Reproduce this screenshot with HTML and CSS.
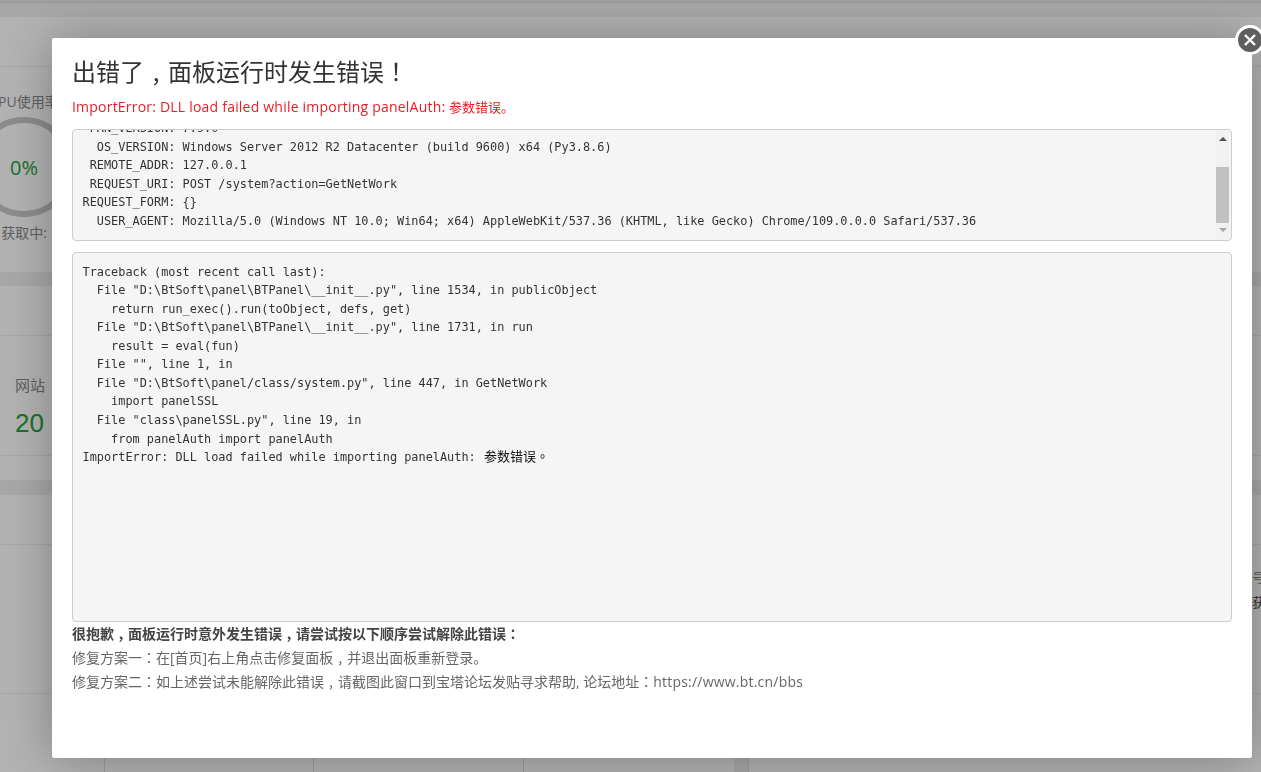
FILE: index.html
```html
<!DOCTYPE html>
<html lang="zh-CN">
<head>
<meta charset="utf-8">
<title>面板错误</title>
<link rel="stylesheet" href="styles.css">
</head>
<body>
<div class="page">
  <div class="topline"></div>
  <section class="card card-state">
    <div class="card-head"></div>
    <div class="card-body">
      <div class="gauge-col">
        <div class="gauge-title">CPU使用率</div>
        <div class="gauge"><span>0%</span></div>
        <div class="gauge-note">获取中:</div>
      </div>
    </div>
  </section>
  <section class="card card-overview">
    <div class="card-head card-head-short"></div>
    <div class="stat">
      <div class="stat-label">网站</div>
      <div class="stat-value">20</div>
    </div>
  </section>
  <section class="card card-info">
    <div class="card-head"></div>
    <div class="info-body">
      <div class="side-text">
        <span>号</span>
        <span class="side-dark">获</span>
      </div>
    </div>
    <div class="info-table">
      <div class="cell cell-a"></div>
      <div class="cell cell-b"></div>
      <div class="cell cell-c"></div>
      <div class="cell-gap"></div>
      <div class="cell cell-e"></div>
    </div>
  </section>
</div>
<div class="shade"></div>
<div class="modal">
  <button class="close" aria-label="关闭">
    <svg viewBox="0 0 14 14" width="14" height="14"><path d="M2 2 L12 12 M12 2 L2 12"/></svg>
  </button>
  <h1 class="title">出错了<span class="p">，</span>面板运行时发生错误<span class="c" lang="zh-TW">！</span></h1>
  <p class="error-line"><span class="latin">ImportError: DLL load failed while importing panelAuth:</span> <span class="err-cjk">参数错误。</span></p>
  <div class="env">
    <pre class="code env-code"> PAN_VERSION: 7.9.0
  OS_VERSION: Windows Server 2012 R2 Datacenter (build 9600) x64 (Py3.8.6)
 REMOTE_ADDR: 127.0.0.1
 REQUEST_URI: POST /system?action=GetNetWork
REQUEST_FORM: {}
  USER_AGENT: Mozilla/5.0 (Windows NT 10.0; Win64; x64) AppleWebKit/537.36 (KHTML, like Gecko) Chrome/109.0.0.0 Safari/537.36</pre>
    <div class="scrollbar">
      <span class="arrow arrow-up"></span>
      <span class="thumb"></span>
      <span class="arrow arrow-down"></span>
    </div>
  </div>
  <pre class="code trace">Traceback (most recent call last):
  File "D:\BtSoft\panel\BTPanel\__init__.py", line 1534, in publicObject
    return run_exec().run(toObject, defs, get)
  File "D:\BtSoft\panel\BTPanel\__init__.py", line 1731, in run
    result = eval(fun)
  File "", line 1, in
  File "D:\BtSoft\panel/class/system.py", line 447, in GetNetWork
    import panelSSL
  File "class\panelSSL.py", line 19, in
    from panelAuth import panelAuth
ImportError: DLL load failed while importing panelAuth: <span class="code-cjk">参数错误<span class="c" lang="zh-TW">。</span></span></pre>
  <div class="help">
    <p class="help-head">很抱歉<span class="p">，</span>面板运行时意外发生错误<span class="p">，</span>请尝试按以下顺序尝试解除此错误<span class="c" lang="zh-TW">：</span></p>
    <p>修复方案一<span class="c" lang="zh-TW">：</span>在[首页]右上角点击修复面板<span class="p">，</span>并退出面板重新登录。</p>
    <p>修复方案二<span class="c" lang="zh-TW">：</span>如上述尝试未能解除此错误<span class="p">，</span>请截图此窗口到宝塔论坛发贴寻求帮助, 论坛地址<span class="c" lang="zh-TW">：</span><span class="latin">https://www.bt.cn/bbs</span></p>
  </div>
</div>
</body>
</html>
```
FILE: styles.css
```css
* { box-sizing: border-box; }
html, body {
  margin: 0;
  height: 100%;
  overflow: hidden;
}
body {
  background: #f0f0f0;
  color: #333;
  font-family: "Open Sans", "Noto Sans CJK SC", sans-serif;
  font-size: 14px;
}
.page {
  display: flex;
  flex-direction: column;
  height: 772px;
  overflow: hidden;
}
.topline {
  height: 3px;
  flex: none;
  background: #e6e6e6;
  border-bottom: 1px solid #d8d8d8;
  margin-bottom: 14px;
}
.card {
  background: #fff;
  flex: none;
}
.card-head {
  height: 50px;
  border-bottom: 1px solid #eee;
}
.card-state { height: 255px; }
.card-overview { height: 194px; margin-top: 14px; }
.card-info { flex: 1; margin-top: 15px; display: flex; flex-direction: column; }
.card-body { padding-top: 25px; }
.gauge-col {
  width: 120px;
  margin-left: -36px;
  display: flex;
  flex-direction: column;
  align-items: center;
  color: #888;
}
.gauge-title { line-height: 20px; white-space: nowrap; }
.gauge {
  width: 100px;
  height: 100px;
  margin-top: 5px;
  border: 6px solid #c8c8c8;
  border-radius: 50%;
  display: flex;
  align-items: center;
  justify-content: center;
  font-size: 20px;
  color: #20a53a;
}
.gauge-note { margin-top: 6px; line-height: 20px; white-space: nowrap; }
.stat {
  height: 120px;
  border-bottom: 1px solid #eee;
}
.stat-label {
  padding-top: 39px;
  font-size: 15px;
  color: #888;
  line-height: 20px;
  padding-left: 15px;
}
.stat-value {
  font-family: "Liberation Sans", sans-serif;
  font-size: 26px;
  line-height: 36px;
  margin-top: 10px;
  padding-left: 15px;
  color: #20a53a;
}
.info-body {
  height: 149px;
  border-bottom: 1px solid #eee;
  display: flex;
  justify-content: flex-end;
  align-items: flex-end;
}
.side-text {
  display: flex;
  flex-direction: column;
  gap: 4px;
  width: 9px;
  margin-bottom: 80px;
  color: #888;
  font-size: 13px;
  line-height: 21px;
  white-space: nowrap;
  overflow: hidden;
}
.side-dark { color: #444; }
.info-table {
  flex: 1;
  display: flex;
  padding-left: 104px;
}
.cell {
  border-left: 1px solid #ddd;
}
.cell-a { width: 209px; }
.cell-b { width: 210px; }
.cell-c { width: 211px; }
.cell-gap { width: 14px; background: #f0f0f0; }
.cell-e { flex: 1; }
.shade {
  position: fixed;
  inset: 0;
  background: rgba(0, 0, 0, 0.3);
}
.modal {
  position: fixed;
  left: 52px;
  top: 38px;
  width: 1200px;
  height: 720px;
  padding: 0 20px;
  background: #fff;
  border-radius: 2px;
  box-shadow: 1px 1px 50px rgba(0, 0, 0, 0.3);
}
.close {
  position: absolute;
  top: -13px;
  right: -13px;
  width: 30px;
  height: 30px;
  padding: 0;
  display: flex;
  align-items: center;
  justify-content: center;
  background: #5f5f5f;
  border: 3px solid #fff;
  border-radius: 50%;
}
.close path {
  fill: none;
  stroke: #fff;
  stroke-width: 2.4;
}
.p {
  display: inline-block;
  width: 1em;
  line-height: 0;
  text-align: center;
  font-feature-settings: "pwid";
}
.c {
  font-family: "Noto Sans CJK TC", sans-serif;
  line-height: 0;
}
.latin { letter-spacing: 0.21px; }
.title {
  margin: 0;
  padding-top: 17px;
  font-size: 24px;
  font-weight: 400;
  line-height: 34px;
  color: #333;
}
.error-line {
  margin: 8px 0 0;
  font-size: 14px;
  line-height: 20px;
  color: #ec1c24;
}
.err-cjk { font-size: 13px; line-height: 0; }
.env {
  position: relative;
  margin-top: 12px;
  height: 112px;
}
.code {
  margin: 0;
  padding: 9.5px;
  background: #f5f5f5;
  border: 1px solid #ccc;
  border-radius: 4px;
  color: #333;
  font-family: "DejaVu Sans Mono", "Noto Sans CJK SC", monospace;
  font-size: 11.88px;
  line-height: 18.57px;
  overflow: hidden;
}
.code-cjk {
  margin-left: 1px;
  font-size: 13px;
  line-height: 0;
  color: #111;
}
.env-code {
  height: 100%;
  display: flex;
  flex-direction: column;
  justify-content: flex-end;
  white-space: pre;
}
.scrollbar {
  position: absolute;
  top: 1px;
  right: 3px;
  bottom: 1px;
  width: 13px;
  display: flex;
  flex-direction: column;
  align-items: center;
  background: #f1f1f1;
}
.thumb {
  width: 13px;
  height: 56px;
  background: #c1c1c1;
}
.arrow {
  width: 0;
  height: 0;
  border-left: 4px solid transparent;
  border-right: 4px solid transparent;
}
.arrow-up {
  margin-top: 7px;
  border-bottom: 4px solid #505050;
  margin-bottom: 26px;
}
.arrow-down {
  margin-top: 5px;
  border-top: 4px solid #a3a3a3;
}
.trace {
  margin-top: 11px;
  height: 370px;
}
.help {
  color: #666;
  font-size: 14px;
  line-height: 24px;
}
.help p { margin: 0; }
.help .help-head {
  font-weight: 700;
  color: #444;
}
```
